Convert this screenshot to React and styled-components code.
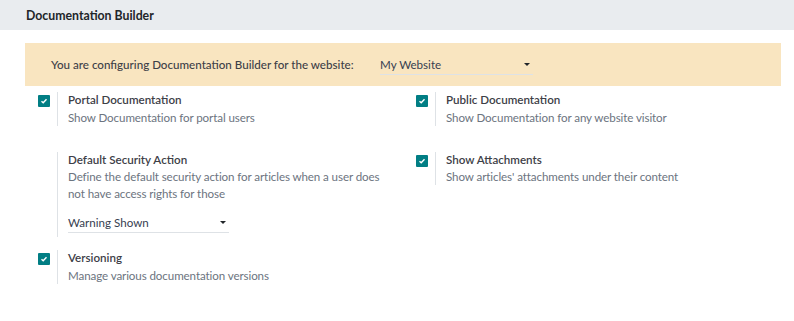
import React from 'react';
import styled, { createGlobalStyle } from 'styled-components';

const GlobalStyle = createGlobalStyle`
    * {
        box-sizing: border-box;
    }
    body {
        margin: 0;
        background: #fff;
        font-family: Lato, "Liberation Sans", sans-serif;
        color: #374151;
    }
`;

const Page = styled.div`
    width: 794px;
    min-height: 321px;
    background: #fff;
`;

const Header = styled.div`
    height: 30px;
    display: flex;
    align-items: center;
    padding-left: 26px;
    background-color: #e9ecef;
    font-size: 12.3px;
    font-weight: 700;
    color: #212529;
`;

const Body = styled.div`
    padding: 13px 13px 0 25px;
`;

const Banner = styled.div`
    height: 43px;
    display: flex;
    align-items: center;
    padding-left: 26px;
    background-color: #f9e5c0;
    font-size: 11.6px;
    font-weight: 500;
    color: #3d4047;

    span {
        width: 329px;
    }
`;

const Select = styled.div`
    display: flex;
    align-items: center;
    justify-content: space-between;
    width: ${props => props.width}px;
    height: 20px;
    padding-right: 3px;
    border-bottom: 1px solid #dee2e6;
    font-size: 11.6px;
    font-weight: 400;
    color: #374151;
`;

const Caret = styled.i`
    width: 0;
    height: 0;
    border-left: 3px solid transparent;
    border-right: 3px solid transparent;
    border-top: 3px solid #212529;
`;

const Grid = styled.div`
    display: grid;
    grid-template-columns: 378px 378px;
    align-items: start;
    padding-top: 6px;
`;

const Setting = styled.div`
    display: flex;
    grid-column: ${props => props.col};
    grid-row: ${props => props.row};
    margin-top: ${props => props.top || 0}px;
`;

const Left = styled.div`
    width: 32px;
    padding: 3px 0 0 13px;
`;

const Check = styled.div`
    width: 12px;
    height: 12px;
    display: flex;
    align-items: center;
    justify-content: center;
    background-color: #017e84;
    border-radius: 1px;
`;

const Right = styled.div`
    flex: 1;
    border-left: 1px solid #dee2e6;
    padding: 0 12px 0 10px;
`;

const Title = styled.div`
    font-size: 11.6px;
    font-weight: 600;
    line-height: 16.5px;
    color: #3d4047;
`;

const Desc = styled.div`
    font-size: 11.6px;
    line-height: 17px;
    letter-spacing: -0.1px;
    color: #6c7480;
`;

const Field = styled.div`
    margin: 11px 0 4px;
`;

function CheckBox() {
    return (
        <Check>
            <svg width="8" height="8" viewBox="0 0 8 8">
                <path d="M1.5 4.2 L3.2 5.8 L6.5 2.2" fill="none" stroke="#fff" strokeWidth="1.4"/>
            </svg>
        </Check>
    );
}

function Box({ col, row, top, checked, title, desc, children }) {
    return (
        <Setting col={col} row={row} top={top}>
            <Left>{checked && <CheckBox/>}</Left>
            <Right>
                <Title>{title}</Title>
                <Desc>{desc}</Desc>
                {children}
            </Right>
        </Setting>
    );
}

export default function App() {
    return (
        <Page>
            <GlobalStyle/>
            <Header>Documentation Builder</Header>
            <Body>
                <Banner>
                    <span>You are configuring Documentation Builder for the website:</span>
                    <Select width={153}>
                        My Website
                        <Caret/>
                    </Select>
                </Banner>
                <Grid>
                    <Box col={1} row={1} checked title="Portal Documentation" desc="Show Documentation for portal users"/>
                    <Box col={2} row={1} checked title="Public Documentation" desc="Show Documentation for any website visitor"/>
                    <Box col={1} row={2} top={26} title="Default Security Action" desc="Define the default security action for articles when a user does not have access rights for those">
                        <Field>
                            <Select width={161}>
                                Warning Shown
                                <Caret/>
                            </Select>
                        </Field>
                    </Box>
                    <Box col={2} row={2} top={26} checked title="Show Attachments" desc="Show articles' attachments under their content"/>
                    <Box col={1} row={3} top={13} checked title="Versioning" desc="Manage various documentation versions"/>
                </Grid>
            </Body>
        </Page>
    );
}
